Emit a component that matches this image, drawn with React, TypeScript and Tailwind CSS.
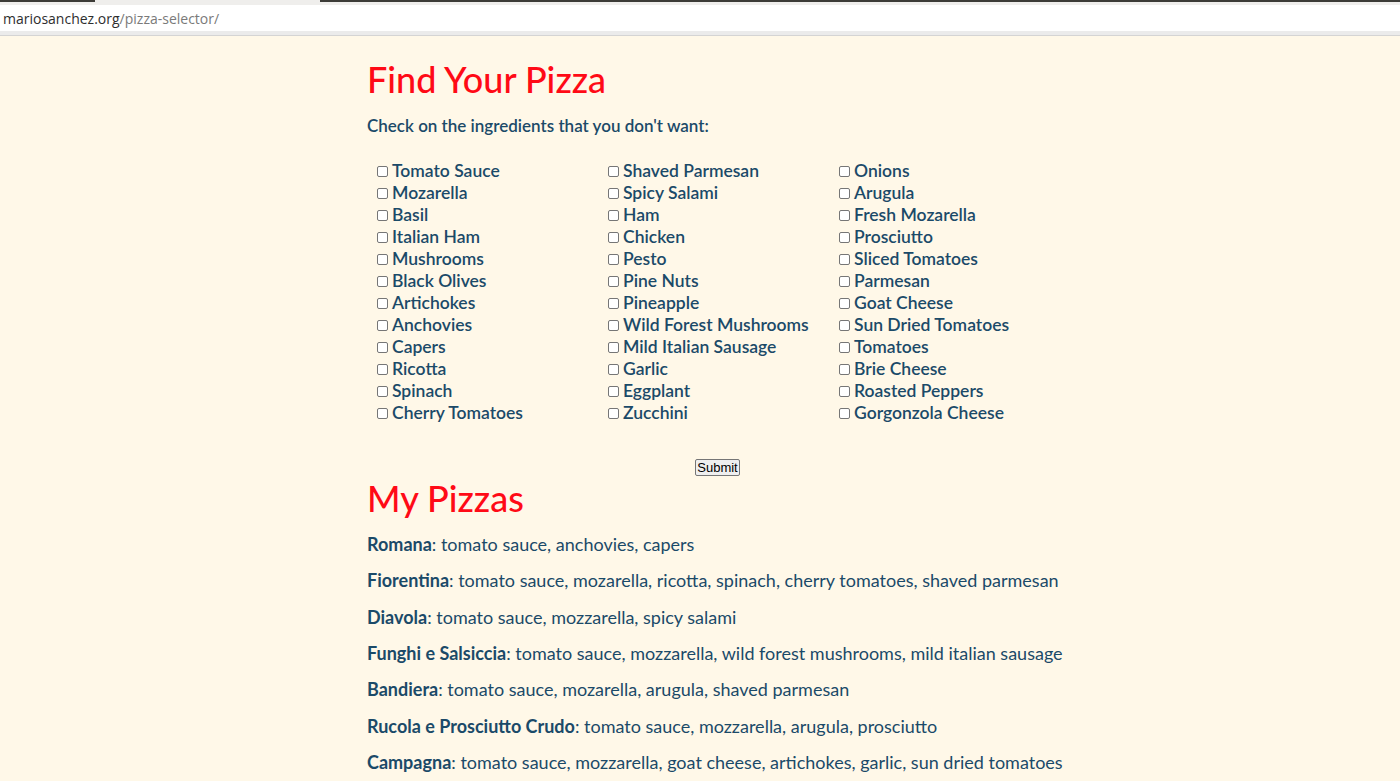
import React from "react";

const ingredients = [
  ["Tomato Sauce", "Shaved Parmesan", "Onions"],
  ["Mozarella", "Spicy Salami", "Arugula"],
  ["Basil", "Ham", "Fresh Mozarella"],
  ["Italian Ham", "Chicken", "Prosciutto"],
  ["Mushrooms", "Pesto", "Sliced Tomatoes"],
  ["Black Olives", "Pine Nuts", "Parmesan"],
  ["Artichokes", "Pineapple", "Goat Cheese"],
  ["Anchovies", "Wild Forest Mushrooms", "Sun Dried Tomatoes"],
  ["Capers", "Mild Italian Sausage", "Tomatoes"],
  ["Ricotta", "Garlic", "Brie Cheese"],
  ["Spinach", "Eggplant", "Roasted Peppers"],
  ["Cherry Tomatoes", "Zucchini", "Gorgonzola Cheese"],
];

const pizzas = [
  { name: "Romana", items: "tomato sauce, anchovies, capers" },
  { name: "Fiorentina", items: "tomato sauce, mozarella, ricotta, spinach, cherry tomatoes, shaved parmesan" },
  { name: "Diavola", items: "tomato sauce, mozzarella, spicy salami" },
  { name: "Funghi e Salsiccia", items: "tomato sauce, mozzarella, wild forest mushrooms, mild italian sausage" },
  { name: "Bandiera", items: "tomato sauce, mozarella, arugula, shaved parmesan" },
  { name: "Rucola e Prosciutto Crudo", items: "tomato sauce, mozzarella, arugula, prosciutto" },
  { name: "Campagna", items: "tomato sauce, mozzarella, goat cheese, artichokes, garlic, sun dried tomatoes" },
];

function BrowserBar() {
  return (
    <div className="h-[36px] bg-[#efeeec] flex flex-col">
      {/* tab strip */}
      <div className="h-[2px] flex">
        <div className="w-[95px] bg-[#3c3b37]" />
        <div className="w-[225px]" />
        <div className="flex-1 bg-[#3c3b37]" />
      </div>
      <div className="h-[3px]" />
      {/* url field */}
      <div className="h-[26px] bg-white flex items-center pl-[3px] text-[14px] font-['Open_Sans',sans-serif]">
        <span className="text-[#2e2e2e]">mariosanchez.org</span>
        <span className="text-[#7a7a7a]">/pizza-selector/</span>
      </div>
      <div className="flex-1 border-b border-[#d4d4d4] bg-[#ebebeb]" />
    </div>
  );
}

export default function App() {
  return (
    <div className="w-[1400px] h-[781px] overflow-hidden bg-[#fff8e8] font-['Lato',sans-serif] text-[#1b4a68]">
      <BrowserBar />

      <div className="w-[700px] ml-[367px]">
        <h1 className="text-[36px] leading-[40px] text-[#ff0a16] font-medium mt-[23px]">Find Your Pizza</h1>

        <p className="text-[17px] font-semibold mt-[16px] leading-[22px]">Check on the ingredients that you don't want:</p>

        {/* ingredient checkboxes */}
        <div className="mt-[23px] pl-[10px] flex flex-col">
          {ingredients.map((row, r) => (
            <div key={r} className="flex h-[22px] items-center">
              {row.map((name) => (
                <label key={name} className="w-[231px] shrink-0 flex items-center text-[17.5px] font-semibold leading-[22px]">
                  <span className="w-[11px] h-[11px] rounded-[2px] border border-[#767676] bg-white mr-[4px] shrink-0" />
                  {name}
                </label>
              ))}
            </div>
          ))}
        </div>

        <div className="flex justify-center mt-[35px]">
          <button className="h-[17px] px-[1px] text-[13px] leading-[13px] text-black font-['Liberation_Sans',sans-serif] bg-[#efefef] border border-[#767676] rounded-[2px] ml-[1px]">
            Submit
          </button>
        </div>

        <h2 className="text-[36px] leading-[40px] text-[#ff0a16] font-medium mt-[2px]">My Pizzas</h2>

        <div className="mt-[8px]">
          {pizzas.map((p) => (
            <p key={p.name} className="text-[18px] leading-[36.33px]">
              <b className="font-bold">{p.name}</b>: {p.items}
            </p>
          ))}
        </div>
      </div>
    </div>
  );
}
